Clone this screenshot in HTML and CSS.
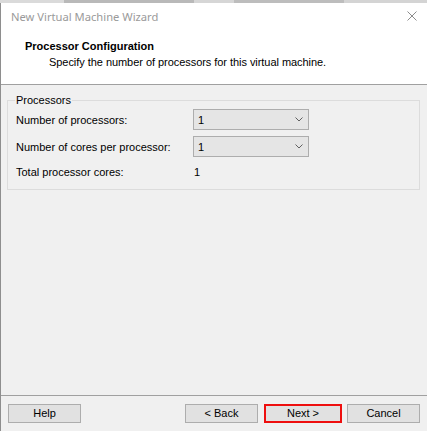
FILE: index.html
```html
<!DOCTYPE html>
<html>
<head>
<meta charset="utf-8">
<link rel="stylesheet" href="styles.css">
</head>
<body>
<div class="screen">
  <div class="behind">
    <span class="seg seg-a"></span>
    <span class="seg seg-b"></span>
    <span class="seg seg-c"></span>
    <span class="seg seg-d"></span>
    <span class="seg seg-e"></span>
  </div>
  <div class="window">
    <div class="titlebar">
      <span class="title">New Virtual Machine Wizard</span>
      <svg class="close" width="10" height="10" viewBox="0 0 10 10"><path d="M0.5 0.5 L9.5 9.5 M9.5 0.5 L0.5 9.5" stroke="#8c8c8c" stroke-width="1" fill="none"/></svg>
    </div>
    <div class="header">
      <div class="h-title">Processor Configuration</div>
      <div class="h-sub">Specify the number of processors for this virtual machine.</div>
    </div>
    <div class="content">
      <fieldset class="group">
        <legend class="legend">Processors</legend>
        <div class="grid">
          <span class="label">Number of processors:</span>
          <div class="select"><span class="val">1</span><svg class="chev" width="8" height="5" viewBox="0 0 8 5"><path d="M0.5 0.5 L4 4 L7.5 0.5" stroke="#606060" stroke-width="1" fill="none"/></svg></div>
          <span class="label">Number of cores per processor:</span>
          <div class="select"><span class="val">1</span><svg class="chev" width="8" height="5" viewBox="0 0 8 5"><path d="M0.5 0.5 L4 4 L7.5 0.5" stroke="#606060" stroke-width="1" fill="none"/></svg></div>
          <span class="label total">Total processor cores:</span>
          <span class="total-val total">1</span>
        </div>
      </fieldset>
    </div>
    <div class="footer">
      <button class="btn">Help</button>
      <button class="btn back">&lt; Back</button>
      <button class="btn next">Next &gt;</button>
      <button class="btn cancel">Cancel</button>
    </div>
  </div>
</div>
</body>
</html>
```
FILE: styles.css
```css
html, body {
  margin: 0;
  padding: 0;
  background: #f0f0f0;
}
.screen {
  width: 427px;
  height: 431px;
  display: flex;
  flex-direction: column;
  overflow: hidden;
  font-family: "Liberation Sans", Arial, sans-serif;
  font-size: 11px;
  color: #000;
}
.behind {
  height: 3px;
  display: flex;
  flex: none;
}
.seg { display: block; height: 3px; }
.seg-a { width: 64px; background: #dadada; }
.seg-b { width: 130px; background: #b9b9b9; }
.seg-c { width: 40px; background: #d6d6d6; }
.seg-d { width: 110px; background: #bdbdbd; }
.seg-e { flex: 1; background: #d4d4d4; }

.window {
  flex: 1;
  display: flex;
  flex-direction: column;
  border-left: 1px solid #8e8e8e;
  background: #f0f0f0;
  min-height: 0;
}
.titlebar {
  height: 29px;
  background: #fff;
  display: flex;
  align-items: center;
  justify-content: space-between;
  padding: 0 10px 0 10px;
  flex: none;
}
.title {
  font-family: "Noto Sans", "Liberation Sans", sans-serif;
  font-size: 11.2px;
  color: #9a9a9a;
  position: relative;
  top: -1px;
}
.close {
  display: block;
  position: relative;
  top: -2px;
}
.header {
  background: #fff;
  border-bottom: 1px solid #a0a0a0;
  flex: none;
  box-sizing: border-box;
  height: 53px;
  padding-top: 7px;
}
.h-title {
  font-weight: bold;
  line-height: 14px;
  padding-left: 24px;
}
.h-sub {
  line-height: 14px;
  padding-left: 48px;
  margin-top: 2px;
  letter-spacing: -0.05px;
}
.content {
  flex: 1;
  padding: 8px 7px 0 6px;
  min-height: 0;
}
.group {
  margin: 0;
  border: 1px solid #dcdcdc;
  padding: 2px 8px 10px 8px;
  min-width: 0;
}
.legend {
  padding: 0 1px;
  margin-left: -1px;
  line-height: 14px;
}
.grid {
  display: grid;
  grid-template-columns: 177px 116px;
  row-gap: 6px;
  align-items: center;
}
.label {
  line-height: 14px;
}
.select {
  height: 21px;
  box-sizing: border-box;
  border: 1px solid #adadad;
  background: #e5e5e5;
  display: flex;
  align-items: center;
  justify-content: space-between;
  padding: 0 5px 0 4px;
}
.val { line-height: 14px; }
.chev { display: block; }
.total { margin-top: 2px; }
.total-val {
  padding-left: 1px;
  line-height: 14px;
}
.footer {
  flex: none;
  border-top: 1px solid #a0a0a0;
  padding: 8px 7px 8px 7px;
  display: flex;
  align-items: center;
}
.btn {
  width: 73px;
  height: 19px;
  box-sizing: border-box;
  border: 1px solid #adadad;
  background: #e1e1e1;
  font-family: "Liberation Sans", Arial, sans-serif;
  font-size: 11px;
  color: #000;
  padding: 0;
  margin: 0;
  line-height: 17px;
}
.back { margin-left: auto; }
.next {
  width: 78px;
  margin-left: 6px;
  border: 2px solid #ee0f0f;
  line-height: 15px;
}
.cancel { margin-left: 5px; }
```
